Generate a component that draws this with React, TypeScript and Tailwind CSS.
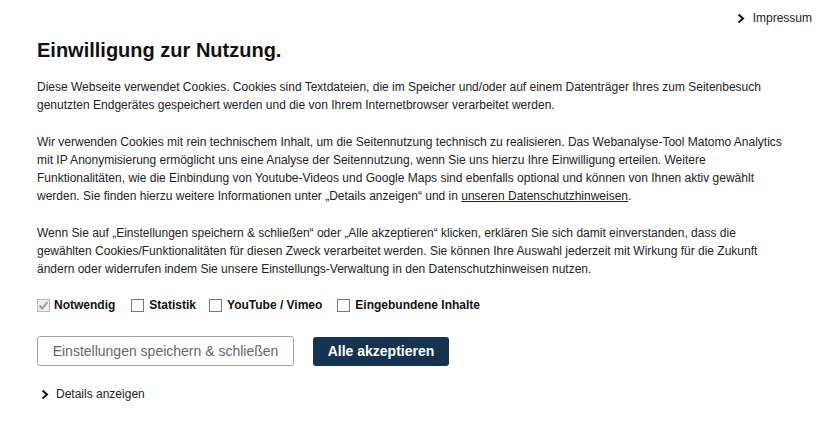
import React from "react";

const Chevron = ({ className = "" }: { className?: string }) => (
  <svg width="8" height="11" viewBox="0 0 8 11" className={className}>
    <path d="M1.5 1.5 L6 5.5 L1.5 9.5" fill="none" stroke="#111" strokeWidth="2" />
  </svg>
);

const Box = ({ checked = false }: { checked?: boolean }) => (
  <span
    className={`inline-flex items-center justify-center w-[13px] h-[13px] border ${
      checked ? "border-[#b5b5b5] bg-[#eeeeee]" : "border-[#767676] bg-white"
    }`}
  >
    {checked && (
      <svg width="11" height="11" viewBox="0 0 11 11">
        <path d="M1.5 5.5 L4.3 8.5 L9.5 2" fill="none" stroke="#9a9a9a" strokeWidth="2" />
      </svg>
    )}
  </span>
);

export default function App() {
  return (
    <div
      className="w-[823px] h-[427px] bg-white text-[#222] relative"
      style={{ fontFamily: '"Liberation Sans", Arial, sans-serif' }}
    >
      <div className="flex justify-end pr-[11px] pt-[10px] h-[16px] box-content">
        <a className="flex items-center gap-[8px] text-[12px] leading-[16px] text-[#222]">
          <Chevron />
          Impressum
        </a>
      </div>
      <div className="pl-[37px] w-[800px]">
        <h1 className="text-[20px] leading-[24px] font-bold text-[#111] mt-[12px]">
          Einwilligung zur Nutzung.
        </h1>
        <div className="text-[12px] leading-[18px] mt-[16px] flex flex-col gap-[19px] whitespace-nowrap">
          <p>
            Diese Webseite verwendet Cookies. Cookies sind Textdateien, die im Speicher und/oder auf einem Datenträger Ihres zum Seitenbesuch
            <br />
            genutzten Endgerätes gespeichert werden und die von Ihrem Internetbrowser verarbeitet werden.
          </p>
          <p>
            Wir verwenden Cookies mit rein technischem Inhalt, um die Seitennutzung technisch zu realisieren. Das Webanalyse-Tool Matomo Analytics
            <br />
            mit IP Anonymisierung ermöglicht uns eine Analyse der Seitennutzung, wenn Sie uns hierzu Ihre Einwilligung erteilen. Weitere
            <br />
            Funktionalitäten, wie die Einbindung von Youtube-Videos und Google Maps sind ebenfalls optional und können von Ihnen aktiv gewählt
            <br />
            werden. Sie finden hierzu weitere Informationen unter „Details anzeigen“ und in{" "}
            <a className="underline">unseren Datenschutzhinweisen</a>.
          </p>
          <p>
            Wenn Sie auf „Einstellungen speichern &amp; schließen“ oder „Alle akzeptieren“ klicken, erklären Sie sich damit einverstanden, dass die
            <br />
            gewählten Cookies/Funktionalitäten für diesen Zweck verarbeitet werden. Sie können Ihre Auswahl jederzeit mit Wirkung für die Zukunft
            <br />
            ändern oder widerrufen indem Sie unsere Einstellungs-Verwaltung in den Datenschutzhinweisen nutzen.
          </p>
        </div>
        <div className="flex items-center mt-[19px] text-[12px] leading-[16px] font-bold text-[#111]">
          <label className="flex items-center gap-[4px]">
            <Box checked />
            Notwendig
          </label>
          <label className="flex items-center gap-[5px] ml-[16px]">
            <Box />
            Statistik
          </label>
          <label className="flex items-center gap-[5px] ml-[13px]">
            <Box />
            YouTube / Vimeo
          </label>
          <label className="flex items-center gap-[5px] ml-[15px]">
            <Box />
            Eingebundene Inhalte
          </label>
        </div>
        <div className="flex items-center mt-[23px] gap-[19px]">
          <button className="w-[257px] h-[30px] border border-[#a0a0a0] rounded-[3px] text-[14px] text-[#666] bg-white">
            Einstellungen speichern &amp; schließen
          </button>
          <button className="w-[136px] h-[29px] rounded-[3px] bg-[#15324f] text-white text-[14px] font-bold">
            Alle akzeptieren
          </button>
        </div>
        <div className="flex items-center gap-[7px] mt-[20px] ml-[4px] text-[12px] leading-[16px] text-[#222]">
          <Chevron />
          Details anzeigen
        </div>
      </div>
    </div>
  );
}
